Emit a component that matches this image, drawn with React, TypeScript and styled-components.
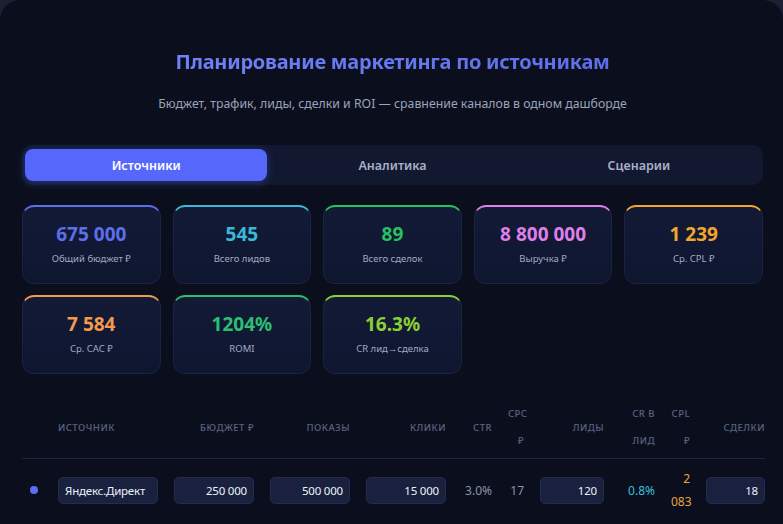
import React from 'react';
import styled, { createGlobalStyle } from 'styled-components';

const GlobalStyle = createGlobalStyle`
  html, body {
    margin: 0;
    padding: 0;
    background: #1b2035;
  }
  body {
    font-family: "Noto Sans", "Open Sans", sans-serif;
    color: #e5e9f5;
    overflow: hidden;
  }
`;

const Page = styled.div`
  min-height: 524px;
  background: #0b0f1d;
  border-radius: 20px 20px 0 0;
  padding: 48px 20px 0 22px;
  box-sizing: border-box;
`;

const Header = styled.header`
  display: flex;
  flex-direction: column;
  align-items: center;
  text-align: center;
`;

const Title = styled.h1`
  margin: 0;
  font-size: 20px;
  line-height: 28px;
  font-weight: 700;
  letter-spacing: -0.25px;
  background: linear-gradient(90deg, #6f82f7, #5c6fe9);
  -webkit-background-clip: text;
  background-clip: text;
  color: transparent;
`;

const Subtitle = styled.p`
  margin: 19px 0 0;
  font-size: 12.3px;
  line-height: 18px;
  color: #9ba3b9;
`;

const TabBar = styled.div`
  display: grid;
  grid-template-columns: repeat(3, 1fr);
  gap: 4px;
  margin-top: 32px;
  padding: 4px 3px;
  background: #111830;
  border-radius: 10px;
`;

const Tab = styled.button<{ $active?: boolean }>`
  height: 32px;
  border: 0;
  border-radius: 8px;
  font-family: inherit;
  font-size: 12.5px;
  font-weight: 600;
  cursor: pointer;
  color: ${(p) => (p.$active ? '#ffffff' : '#a9b0c6')};
  background: ${(p) => (p.$active ? '#5668fb' : 'transparent')};
  box-shadow: ${(p) => (p.$active ? '0 2px 10px rgba(86, 104, 251, 0.35)' : 'none')};
`;

const StatGrid = styled.div`
  display: grid;
  grid-template-columns: repeat(5, 1fr);
  gap: 11px 12px;
  margin-top: 20px;
`;

const StatCard = styled.div<{ $accent: string }>`
  height: 79px;
  box-sizing: border-box;
  padding-top: 14px;
  border-radius: 12px;
  border: 1px solid rgba(120, 140, 200, 0.09);
  border-top: 2px solid ${(p) => p.$accent};
  background: linear-gradient(180deg, #121a36 0%, #0f1630 100%);
  display: flex;
  flex-direction: column;
  align-items: center;
`;

const StatValue = styled.div<{ $color: string }>`
  font-size: 19px;
  line-height: 26px;
  font-weight: 700;
  color: ${(p) => p.$color};
`;

const StatLabel = styled.div`
  margin-top: 5px;
  font-size: 9.5px;
  line-height: 14px;
  color: #a2aac0;
`;

// the table is wider than the card, so it is clipped on the right
const TableWrap = styled.div`
  margin-top: 26px;
  overflow: hidden;
  width: 743px;
`;

const COLS = '28px 116px 96px 96px 96px 46px 32px 80px 51px 35px 75px';

const HeadRow = styled.div`
  display: grid;
  grid-template-columns: ${COLS};
  align-items: center;
  width: max-content;
  padding-bottom: 4px;
  border-bottom: 1px solid #1d243c;
`;

const HeadCell = styled.div<{ $left?: boolean }>`
  padding: 0 8px;
  font-size: 9.5px;
  line-height: 27px;
  font-weight: 500;
  letter-spacing: 0.5px;
  text-transform: uppercase;
  color: #5a6380;
  text-align: ${(p) => (p.$left ? 'left' : 'right')};
  white-space: normal;
  word-break: keep-all;
`;

const BodyRow = styled.div`
  display: grid;
  grid-template-columns: ${COLS};
  align-items: center;
  width: max-content;
  padding: 8px 0;
`;

const Cell = styled.div<{ $color?: string }>`
  padding: 0 8px;
  font-size: 12px;
  line-height: 23px;
  text-align: right;
  color: ${(p) => p.$color || '#8a93a9'};
`;

const Dot = styled.span<{ $color: string }>`
  display: block;
  width: 8px;
  height: 8px;
  border-radius: 50%;
  background: ${(p) => p.$color};
`;

const Field = styled.input<{ $left?: boolean }>`
  width: 100%;
  height: 27px;
  box-sizing: border-box;
  padding: 0 6px;
  border: 1px solid #232c4c;
  border-radius: 5px;
  background: #19213f;
  color: #eef1fa;
  font-family: inherit;
  font-size: 11.5px;
  letter-spacing: -0.2px;
  text-align: ${(p) => (p.$left ? 'left' : 'right')};
  outline: none;
`;

const stats = [
  { value: '675 000', label: 'Общий бюджет ₽', color: '#5c6fea' },
  { value: '545', label: 'Всего лидов', color: '#3ab9d6' },
  { value: '89', label: 'Всего сделок', color: '#27c160' },
  { value: '8 800 000', label: 'Выручка ₽', color: '#de7fea' },
  { value: '1 239', label: 'Ср. CPL ₽', color: '#f2a72c' },
  { value: '7 584', label: 'Ср. CAC ₽', color: '#f39a4c' },
  { value: '1204%', label: 'ROMI', color: '#2bbf72' },
  { value: '16.3%', label: 'CR лид→сделка', color: '#8ccf35' },
];

const headers = [
  { text: '', left: true },
  { text: 'Источник', left: true },
  { text: 'Бюджет ₽' },
  { text: 'Показы' },
  { text: 'Клики' },
  { text: 'CTR' },
  { text: 'CPC ₽' },
  { text: 'Лиды' },
  { text: 'CR в лид' },
  { text: 'CPL ₽' },
  { text: 'Сделки' },
];

export default function App() {
  return (
    <>
      <GlobalStyle />
      <Page>
        <Header>
          <Title>Планирование маркетинга по источникам</Title>
          <Subtitle>Бюджет, трафик, лиды, сделки и ROI — сравнение каналов в одном дашборде</Subtitle>
        </Header>

        <TabBar>
          <Tab $active>Источники</Tab>
          <Tab>Аналитика</Tab>
          <Tab>Сценарии</Tab>
        </TabBar>

        <StatGrid>
          {stats.map((s) => (
            <StatCard key={s.label} $accent={s.color}>
              <StatValue $color={s.color}>{s.value}</StatValue>
              <StatLabel>{s.label}</StatLabel>
            </StatCard>
          ))}
        </StatGrid>

        <TableWrap>
          <HeadRow>
            {headers.map((h, i) => (
              <HeadCell key={i} $left={h.left}>{h.text}</HeadCell>
            ))}
          </HeadRow>
          <BodyRow>
            <Cell><Dot $color="#5b6ef5" /></Cell>
            <Cell><Field $left defaultValue="Яндекс.Директ" /></Cell>
            <Cell><Field defaultValue="250 000" /></Cell>
            <Cell><Field defaultValue="500 000" /></Cell>
            <Cell><Field defaultValue="15 000" /></Cell>
            <Cell>3.0%</Cell>
            <Cell>17</Cell>
            <Cell><Field defaultValue="120" /></Cell>
            <Cell $color="#3cbfd8">0.8%</Cell>
            <Cell $color="#e9a53a">2 083</Cell>
            <Cell><Field defaultValue="18" /></Cell>
          </BodyRow>
        </TableWrap>
      </Page>
    </>
  );
}
